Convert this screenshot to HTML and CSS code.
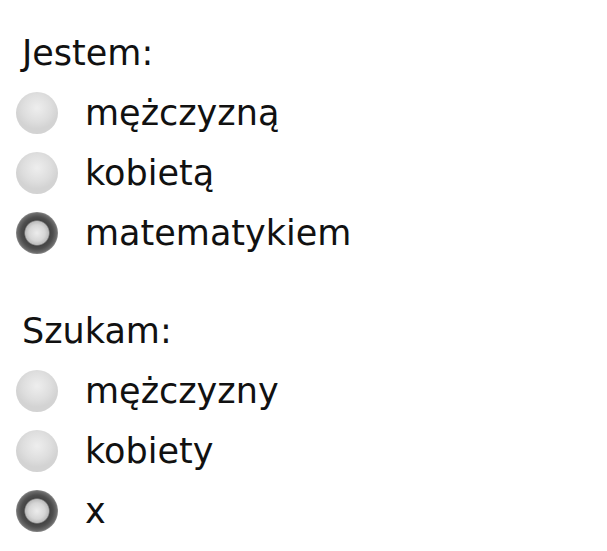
FILE: index.html
```html
<!DOCTYPE html>
<html lang="pl">
<head>
  <meta charset="UTF-8">
  <meta name="viewport" content="width=device-width, initial-scale=1">
  <title>Jestem / Szukam</title>
  <link rel="stylesheet" href="styles.css">
</head>
<body>
  <form class="container">
    <fieldset class="group">
      <legend>Jestem:</legend>
      <label class="option"><input type="radio" name="jestem" value="m"> mężczyzną</label>
      <label class="option"><input type="radio" name="jestem" value="k"> kobietą</label>
      <label class="option"><input type="radio" name="jestem" value="mat" checked> matematykiem</label>
    </fieldset>

    <fieldset class="group">
      <legend>Szukam:</legend>
      <label class="option"><input type="radio" name="szukam" value="m"> mężczyzny</label>
      <label class="option"><input type="radio" name="szukam" value="k"> kobiety</label>
      <label class="option"><input type="radio" name="szukam" value="x" checked> x</label>
    </fieldset>
  </form>
</body>
</html>
```

FILE: styles.css
```css
body {
  margin: 0;
  background: #fff;
  font-family: 'DejaVu Sans', sans-serif;
  font-size: 35px;
  color: #111;
}
.container {
  padding: 23px 0 0 0;
}
.group {
  border: none;
  margin: 0 0 38px 0;
  padding: 0;
}
.group:last-child {
  margin-bottom: 0;
}
.group legend {
  float: left;
  width: 100%;
  height: 60px;
  line-height: 60px;
  padding: 0 0 0 22px;
}
.option {
  clear: both;
  display: flex;
  align-items: center;
  height: 60px;
  padding-left: 16px;
}
.option input {
  appearance: none;
  -webkit-appearance: none;
  width: 42px;
  height: 42px;
  margin: 0 27px 0 0;
  border-radius: 50%;
  background: radial-gradient(circle at 50% 38%, #eeeeee 0, #dedede 14px, #d3d3d3 21px);
  flex: none;
}
.option input:checked {
  background: radial-gradient(circle at 50% 50%, #ececec 0, #d6d6d6 8px, #bdbdbd 11.5px, #444 13px, #4e4e4e 16px, #6a6a6a 19.5px, #8c8c8c 21px);
}
```
